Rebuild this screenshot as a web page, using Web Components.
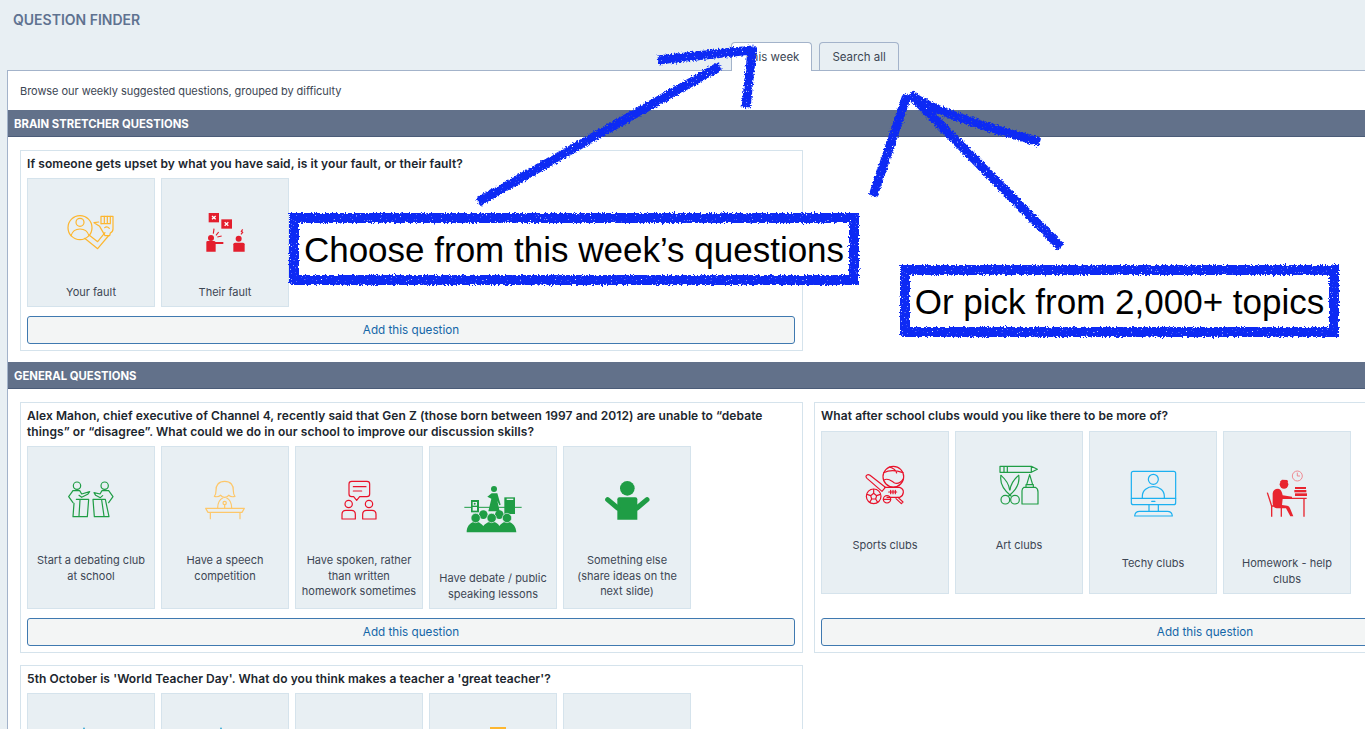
<!DOCTYPE html>
<html lang="en">
<head>
<meta charset="utf-8">
<title>Question finder</title>
<style>
  html, body { margin: 0; height: 729px; overflow: hidden; background: #e8eff3; }
</style>
</head>
<body>
<finder-page>
  <span slot="heading">QUESTION FINDER</span>
  <finder-tab slot="tabs" active>This week</finder-tab>
  <finder-tab slot="tabs">Search all</finder-tab>
  <finder-panel>
    <span slot="intro">Browse our weekly suggested questions, grouped by difficulty</span>
    <finder-section heading="BRAIN STRETCHER QUESTIONS">
      <question-card question="If someone gets upset by what you have said, is it your fault, or their fault?" row="129">
        <answer-tile icon="fist">Your fault</answer-tile>
        <answer-tile icon="blame">Their fault</answer-tile>
      </question-card>
    </finder-section>
    <finder-section heading="GENERAL QUESTIONS">
      <question-card question="Alex Mahon, chief executive of Channel 4, recently said that Gen Z (those born between 1997 and 2012) are unable to “debate things” or “disagree”. What could we do in our school to improve our discussion skills?" row="163">
        <answer-tile icon="debate">Start a debating club at school</answer-tile>
        <answer-tile icon="speech">Have a speech competition</answer-tile>
        <answer-tile icon="spoken">Have spoken, rather than written<br>homework sometimes</answer-tile>
        <answer-tile icon="audience" tall>Have debate / public speaking lessons</answer-tile>
        <answer-tile icon="shrug">Something else<br>(share ideas on the next slide)</answer-tile>
      </question-card>
      <question-card question="What after school clubs would you like there to be more of?" row="163" roomy>
        <answer-tile icon="sports">Sports clubs</answer-tile>
        <answer-tile icon="art">Art clubs</answer-tile>
        <answer-tile icon="tech" tall>Techy clubs</answer-tile>
        <answer-tile icon="homework" tall>Homework - help clubs</answer-tile>
      </question-card>
      <question-card question="5th October is 'World Teacher Day'. What do you think makes a teacher a 'great teacher'?" row="163" cut>
        <answer-tile icon="peakBlue" dx="-7"></answer-tile>
        <answer-tile icon="peakBlue" dx="-4"></answer-tile>
        <answer-tile></answer-tile>
        <answer-tile icon="peakAmber" dx="5"></answer-tile>
        <answer-tile></answer-tile>
      </question-card>
    </finder-section>
  </finder-panel>
  <ink-arrows slot="ink"></ink-arrows>
  <ink-note slot="ink" x="289" y="213" w="570" h="72" size="35">Choose from this week’s questions</ink-note>
  <ink-note slot="ink" x="900" y="265" w="439" h="72" size="35">Or pick from 2,000+ topics</ink-note>
</finder-page>

<script>
const FONT = 'Inter, "Noto Sans", "Liberation Sans", sans-serif';
const INK = '#0a2cf4';
const RED = '#e8132b';
const GREEN = '#1f9d45';
const AMBER = '#fdb62f';

// icons are drawn in coordinates three times bigger than they show
const ICONS = {
  fist: { box: '143 119 142 108', color: AMBER, body: `
    <circle cx="182" cy="160" r="36"/><circle cx="182" cy="144" r="12"/>
    <path d="M155 184c4-13 15-20 27-20s23 7 27 20"/>
    <path d="M196 192l39 31 32-38M212 184l23 18 22-27"/>
    <path d="M245 148v-22h36v38q0 8-8 12l-2 8h-14l-16-28-17-11 14-2"/>
    <path d="M255 126v20M264 126v20M273 126v20M246 148h27M256 160q7-6 14 2"/>` },
  blame: { box: '553 112 122 122', color: '#e31e2d', fill: true, body: `
    <rect x="564" y="115" width="31" height="28"/><rect x="602" y="134" width="32" height="28"/>
    <path d="M574 124l11 10M585 124l-11 10M612 143l11 10M623 143l-11 10" stroke="#fff" stroke-width="4" fill="none"/>
    <circle cx="571" cy="190" r="9"/><path d="M557 231v-28q0-4 4-4h20l4 3h23v6h-23v23z"/>
    <circle cx="654" cy="192" r="9"/><path d="M638 231v-22q0-5 5-5h24q5 0 5 5v22z"/>
    <path d="M578 177l2-15M586 182l8-10M590 187l13-3M661 179l5-6-4-3 4-6" stroke="#e31e2d" stroke-width="3.5" fill="none"/>` },
  debate: { box: '145 113 138 112', color: GREEN, body: `
    <circle cx="172" cy="127" r="11"/><circle cx="255" cy="127" r="11"/>
    <path d="M160 142h20l6 10 24-7-6 8-18 9-8-6M160 142l-13 18 13 18"/>
    <path d="M170 168h37l-4 52h-43l3-40M181 170l-3 48"/>
    <path d="M267 142h-20l-6 10-18-4 5 8 14 7 7-6M267 142l13 18-13 18"/>
    <path d="M220 168h37l11 52h-44zM246 170l7 48"/>` },
  speech: { box: '554 108 120 118', color: '#fdc76a', body: `
    <path d="M613 112c-18 0-27 12-26 28 0 9-2 14-5 17 6 2 14 1 19-3M613 112c18 0 27 12 26 28 0 9 2 14 5 17-6 2-14 1-19-3"/>
    <path d="M601 154c3 4 8 6 12 6s9-2 12-6M592 192c0-14 6-26 16-31M634 192c0-14-6-26-16-31"/>
    <circle cx="613" cy="177" r="5"/><path d="M613 182v10"/>
    <path d="M556 193h116l-7 12h-102zM570 205v19M659 205v19"/>` },
  spoken: { box: '963 108 109 120', color: RED, body: `
    <path d="M995 112h46q8 0 8 8v30q0 8-8 8h-22l-9 11-9-11h-6q-8 0-8-8v-30q0-8 8-8z"/>
    <path d="M1000 128h38M1000 141h25"/>
    <circle cx="986" cy="180" r="11"/><circle cx="1047" cy="180" r="11"/>
    <path d="M966 225v-14q0-12 12-12h16q12 0 12 12v14zM1028 225v-14q0-12 12-12h16q12 0 12 12v14z"/>` },
  audience: { box: '122 123 175 145', color: GREEN, fill: true, body: `
    <path d="M123 190h172" stroke="${GREEN}" stroke-width="3" fill="none"/>
    <rect x="143" y="168" width="24" height="37"/><rect x="243" y="160" width="32" height="50"/>
    <rect x="148" y="174" width="13" height="11" fill="#e8eff3"/><circle cx="154" cy="179" r="3"/>
    <rect x="148" y="189" width="13" height="11" fill="#e8eff3"/><rect x="250" y="164" width="20" height="4" fill="#e8eff3"/>
    <circle cx="212" cy="135" r="9"/><path d="M205 148l-13 10 12 6-9 38h34l-7-32 6 14 4-2-10-34z"/>
    <circle cx="180" cy="212" r="13"/><circle cx="228" cy="212" r="13"/>
    <path d="M130 265c0-18 10-28 20-31h14c5 2 10 5 16 12 5-7 11-10 18-12h14c7 2 13 5 16 12 5-7 10-10 16-12h14c10 3 20 13 21 31z"/>
    <circle cx="157" cy="222" r="14" stroke="#e8eff3" stroke-width="2"/><circle cx="205" cy="222" r="14" stroke="#e8eff3" stroke-width="2"/><circle cx="251" cy="222" r="14" stroke="#e8eff3" stroke-width="2"/>` },
  shrug: { box: '536 108 138 122', color: GREEN, fill: true, body: `
    <circle cx="606" cy="133" r="22"/>
    <path d="M582 160h48q6 0 6 6v61h-60v-61q0-6 6-6z"/>
    <path d="M547 167l30 25M665 167l-30 25" stroke="${GREEN}" stroke-width="15" stroke-linecap="round" fill="none"/>` },
  sports: { box: '151 105 120 120', color: RED, body: `
    <circle cx="236" cy="140" r="31"/><path d="M207 128c16-8 36-8 58 0M208 150c14-8 22 4 30 8s18 2 27-10M224 111c14 4 20 10 22 18"/>
    <path d="M157 145q-6-6 0-10 4-3 9 1l46 36-10 12z"/>
    <circle cx="177" cy="199" r="22"/><path d="M177 190l9 7-3 10h-12l-3-10zM177 190v-12M186 197l11-4M183 207l6 10M171 207l-6 10M168 197l-11-4"/>
    <path d="M210 172h45q12 4 11 15t-11 15h-38"/><path d="M222 186h24M228 181v10M235 181v10M242 181v10"/>
    <circle cx="217" cy="208" r="11"/><path d="M206 208h22"/>
    <path d="M250 202l15 14-5 5-16-15"/>` },
  art: { box: '553 103 121 123', color: GREEN, body: `
    <path d="M556 107h94l18 9-18 9h-94zM650 107v18M568 107v18M578 107v18"/>
    <path d="M559 134c-5 26 10 46 30 62M612 134c5 26-10 46-30 62"/>
    <path d="M559 134c14 12 24 28 26 44M612 134c-14 12-24 28-26 44"/>
    <circle cx="572" cy="207" r="13"/><circle cx="601" cy="207" r="13"/>
    <path d="M645 132l-9 30h18zM634 162h22v8h-22zM628 170h34q8 4 8 14v36h-48v-40q0-6 6-10z"/>` },
  tech: { box: '133 122 141 142', color: '#1cb0f0', body: `
    <rect x="137" y="126" width="133" height="100" rx="6"/><path d="M137 207h133M198 216h10"/>
    <circle cx="203" cy="150" r="15"/><path d="M170 207v-6c0-18 15-29 33-29s33 11 33 29v6"/>
    <path d="M190 226v20M218 226v20M147 260q1-14 15-14h83q14 0 15 14z"/>` },
  homework: { box: '543 122 128 142', color: '#e8252f', fill: true, body: `
    <circle cx="637" cy="140" r="15" fill="none" stroke="#ee8a92" stroke-width="3"/><path d="M637 130v10h8" fill="none" stroke="#ee8a92" stroke-width="3"/>
    <circle cx="597" cy="165" r="13"/><path d="M585 158h24l-2-6-16-1z"/>
    <path d="M563 192q2-14 16-14 8 0 12 12l2 8 28 4v7h-28l-2 18 16 2q6 0 8 8l10 24h-9l-13-24h-28q-12-2-12-16z"/>
    <path d="M547 190l13 40V262M560 230h29V262M588 207h77M657 207v55" fill="none" stroke="#e8252f" stroke-width="4"/>
    <rect x="630" y="173" width="33" height="6"/><rect x="628" y="182" width="36" height="7"/><rect x="630" y="192" width="36" height="8"/>` },
  peakBlue: { box: '0 0 18 120', color: '#1f9fd0', fill: true, body: `<path d="M9 0l3 6v114h-6v-114z"/>` },
  peakAmber: { box: '0 0 48 120', color: AMBER, fill: true, body: `<rect width="48" height="120"/>` }
};

class FinderPage extends HTMLElement {
  connectedCallback() {
    let shadowRoot = this.attachShadow({mode: 'open'});
    shadowRoot.innerHTML = `
      <style>
        :host { display: block; position: relative; width: 1630px; font-family: ${FONT}; color: #3c4653; }
        .heading { height: 42px; box-sizing: border-box; padding: 12px 0 0 13px; font-size: 14px; line-height: 16px; font-weight: 600; color: #5f7290; }
        .tabs { display: flex; justify-content: center; gap: 7px; height: 29px; margin-bottom: -1px; position: relative; z-index: 1; }
        .main { padding: 0 7px; }
      </style>
      <div class="heading"><slot name="heading"></slot></div>
      <div class="tabs"><slot name="tabs"></slot></div>
      <div class="main"><slot></slot></div>
      <slot name="ink"></slot>
    `;
  }
}

class FinderTab extends HTMLElement {
  connectedCallback() {
    let shadowRoot = this.attachShadow({mode: 'open'});
    shadowRoot.innerHTML = `
      <style>
        :host { display: flex; align-items: center; box-sizing: border-box; height: 28px; padding: 0 12px; font-size: 11.5px;
          border: 1px solid #a3b3ca; border-bottom: none; border-radius: 4px 4px 0 0; background: #e8eff3; }
        :host([active]) { height: 29px; background: #fff; }
      </style>
      <slot></slot>
    `;
  }
}

class FinderPanel extends HTMLElement {
  connectedCallback() {
    let shadowRoot = this.attachShadow({mode: 'open'});
    shadowRoot.innerHTML = `
      <style>
        :host { display: block; background: #fff; border: 1px solid #a3b3ca; border-bottom: none; }
        .intro { height: 39px; box-sizing: border-box; padding: 13px 12px 0; font-size: 11px; line-height: 14px; letter-spacing: -0.05px; }
      </style>
      <div class="intro"><slot name="intro"></slot></div>
      <slot></slot>
    `;
  }
}

class FinderSection extends HTMLElement {
  connectedCallback() {
    let shadowRoot = this.attachShadow({mode: 'open'});
    shadowRoot.innerHTML = `
      <style>
        :host { display: block; }
        .bar { height: 27px; box-sizing: border-box; padding: 1px 6px 0; display: flex; align-items: center; background: #62718a;
          border-bottom: 1px solid #4b5c78; color: #fff; font-size: 11.3px; font-weight: 700; }
        .cards { display: grid; grid-template-columns: 783px 783px; column-gap: 11px; row-gap: 12px; padding: 13px 12px 11px; }
      </style>
      <div class="bar">${this.getAttribute('heading')}</div>
      <div class="cards"><slot></slot></div>
    `;
  }
}

class QuestionCard extends HTMLElement {
  connectedCallback() {
    let shadowRoot = this.attachShadow({mode: 'open'});
    // the last card runs off the bottom of the page, its button is never seen
    let button = this.hasAttribute('cut') ? '' : '<add-button>Add this question</add-button>';
    shadowRoot.innerHTML = `
      <style>
        :host { display: flex; flex-direction: column; box-sizing: border-box; padding: 5px 7px 6px 6px; border: 1px solid #d5e3ec; background: #fff; }
        .question { font-size: 12px; letter-spacing: 0.08px; line-height: 16px; font-weight: 600; color: #20262e; margin-bottom: 6px; }
        :host([roomy]) .question { margin-bottom: 7px; }
        .tiles { display: flex; gap: 6px; height: ${this.getAttribute('row')}px; margin-bottom: 9px; }
      </style>
      <div class="question">${this.getAttribute('question')}</div>
      <div class="tiles"><slot></slot></div>
      ${button}
    `;
  }
}

class AnswerTile extends HTMLElement {
  connectedCallback() {
    let shadowRoot = this.attachShadow({mode: 'open'});
    let icon = ICONS[this.getAttribute('icon')];
    let picture = '';
    if (icon) {
      let size = icon.box.split(' ');
      let paint = icon.fill
        ? `fill="${icon.color}" stroke="none"`
        : `fill="none" stroke="${icon.color}" stroke-width="3.6" stroke-linejoin="round" stroke-linecap="round"`;
      let dx = this.getAttribute('dx') || 0;
      picture = `<svg style="transform: translateX(${dx}px)" width="${size[2] / 3}" height="${size[3] / 3}" viewBox="${icon.box}" ${paint}>${icon.body}</svg>`;
    }
    shadowRoot.innerHTML = `
      <style>
        :host { display: block; box-sizing: border-box; width: 128px; height: 100%; border: 1px solid #d5e3ec; background: #e8eff3;
          font-size: 11px; line-height: 15.5px; text-align: center; }
        .picture { height: 106px; display: flex; align-items: center; justify-content: center; }
        :host([tall]) .picture { height: 124px; }
        .label { padding: 0 3px; }
      </style>
      <div class="picture">${picture}</div>
      <div class="label"><slot></slot></div>
    `;
  }
}

class AddButton extends HTMLElement {
  connectedCallback() {
    let shadowRoot = this.attachShadow({mode: 'open'});
    shadowRoot.innerHTML = `
      <style>
        :host { display: flex; align-items: center; justify-content: center; box-sizing: border-box; height: 28px; margin-top: auto;
          border: 1px solid #3f79b0; border-radius: 3px; background: #f3f5f5; color: #1366a8; font-size: 11.7px; cursor: pointer; }
      </style>
      <slot></slot>
    `;
  }
}

// the rough crayon edge used by every blue scribble
const ROUGH = `
  <filter id="rough" x="-10%" y="-10%" width="120%" height="120%">
    <feTurbulence type="fractalNoise" baseFrequency="0.55" numOctaves="2" seed="4" result="noise"/>
    <feDisplacementMap in="SourceGraphic" in2="noise" scale="5" xChannelSelector="R" yChannelSelector="G" result="moved"/>
    <feTurbulence type="fractalNoise" baseFrequency="0.8" numOctaves="1" seed="9"/>
    <feColorMatrix type="matrix" values="0 0 0 0 0  0 0 0 0 0  0 0 0 0 0  -9 0 0 0 7.1"/>
    <feComposite in="moved" operator="in"/>
  </filter>`;

class InkArrows extends HTMLElement {
  connectedCallback() {
    let shadowRoot = this.attachShadow({mode: 'open'});
    shadowRoot.innerHTML = `
      <style>
        :host { position: absolute; left: 0; top: 0; width: 1365px; height: 729px; pointer-events: none; z-index: 2; }
        svg { display: block; }
      </style>
      <svg width="1365" height="729" viewBox="0 0 1365 729" fill="none" stroke="${INK}" stroke-width="9" stroke-linejoin="round">
        <defs>${ROUGH}</defs>
        <g filter="url(#rough)">
          <path d="M478 202L720 66"/>
          <path d="M658 60L752 50L746 108"/>
          <path d="M873 196L907 95"/>
          <path d="M910 94Q930 112 1040 142"/>
          <path d="M910 94L1061 247"/>
        </g>
      </svg>
    `;
  }
}

class InkNote extends HTMLElement {
  connectedCallback() {
    let shadowRoot = this.attachShadow({mode: 'open'});
    let w = +this.getAttribute('w');
    let h = +this.getAttribute('h');
    shadowRoot.innerHTML = `
      <style>
        :host { position: absolute; left: ${this.getAttribute('x')}px; top: ${this.getAttribute('y')}px; width: ${w}px; height: ${h}px;
          box-sizing: border-box; padding-top: 1px; display: flex; align-items: center; justify-content: center; pointer-events: none; z-index: 3;
          font-family: "Liberation Sans", Arial, sans-serif; font-size: ${this.getAttribute('size')}px; color: #000; white-space: nowrap; }
        svg { position: absolute; left: 0; top: 0; overflow: visible; }
        span { position: relative; }
      </style>
      <svg width="${w}" height="${h}" viewBox="0 0 ${w} ${h}">
        <defs>${ROUGH}</defs>
        <rect x="5" y="5" width="${w - 10}" height="${h - 10}" fill="#fff"/>
        <rect x="5" y="5" width="${w - 10}" height="${h - 10}" fill="none" stroke="${INK}" stroke-width="10" filter="url(#rough)"/>
      </svg>
      <span><slot></slot></span>
    `;
  }
}

window.customElements.define('finder-page', FinderPage);
window.customElements.define('finder-tab', FinderTab);
window.customElements.define('finder-panel', FinderPanel);
window.customElements.define('finder-section', FinderSection);
window.customElements.define('question-card', QuestionCard);
window.customElements.define('answer-tile', AnswerTile);
window.customElements.define('add-button', AddButton);
window.customElements.define('ink-arrows', InkArrows);
window.customElements.define('ink-note', InkNote);
</script>
</body>
</html>
